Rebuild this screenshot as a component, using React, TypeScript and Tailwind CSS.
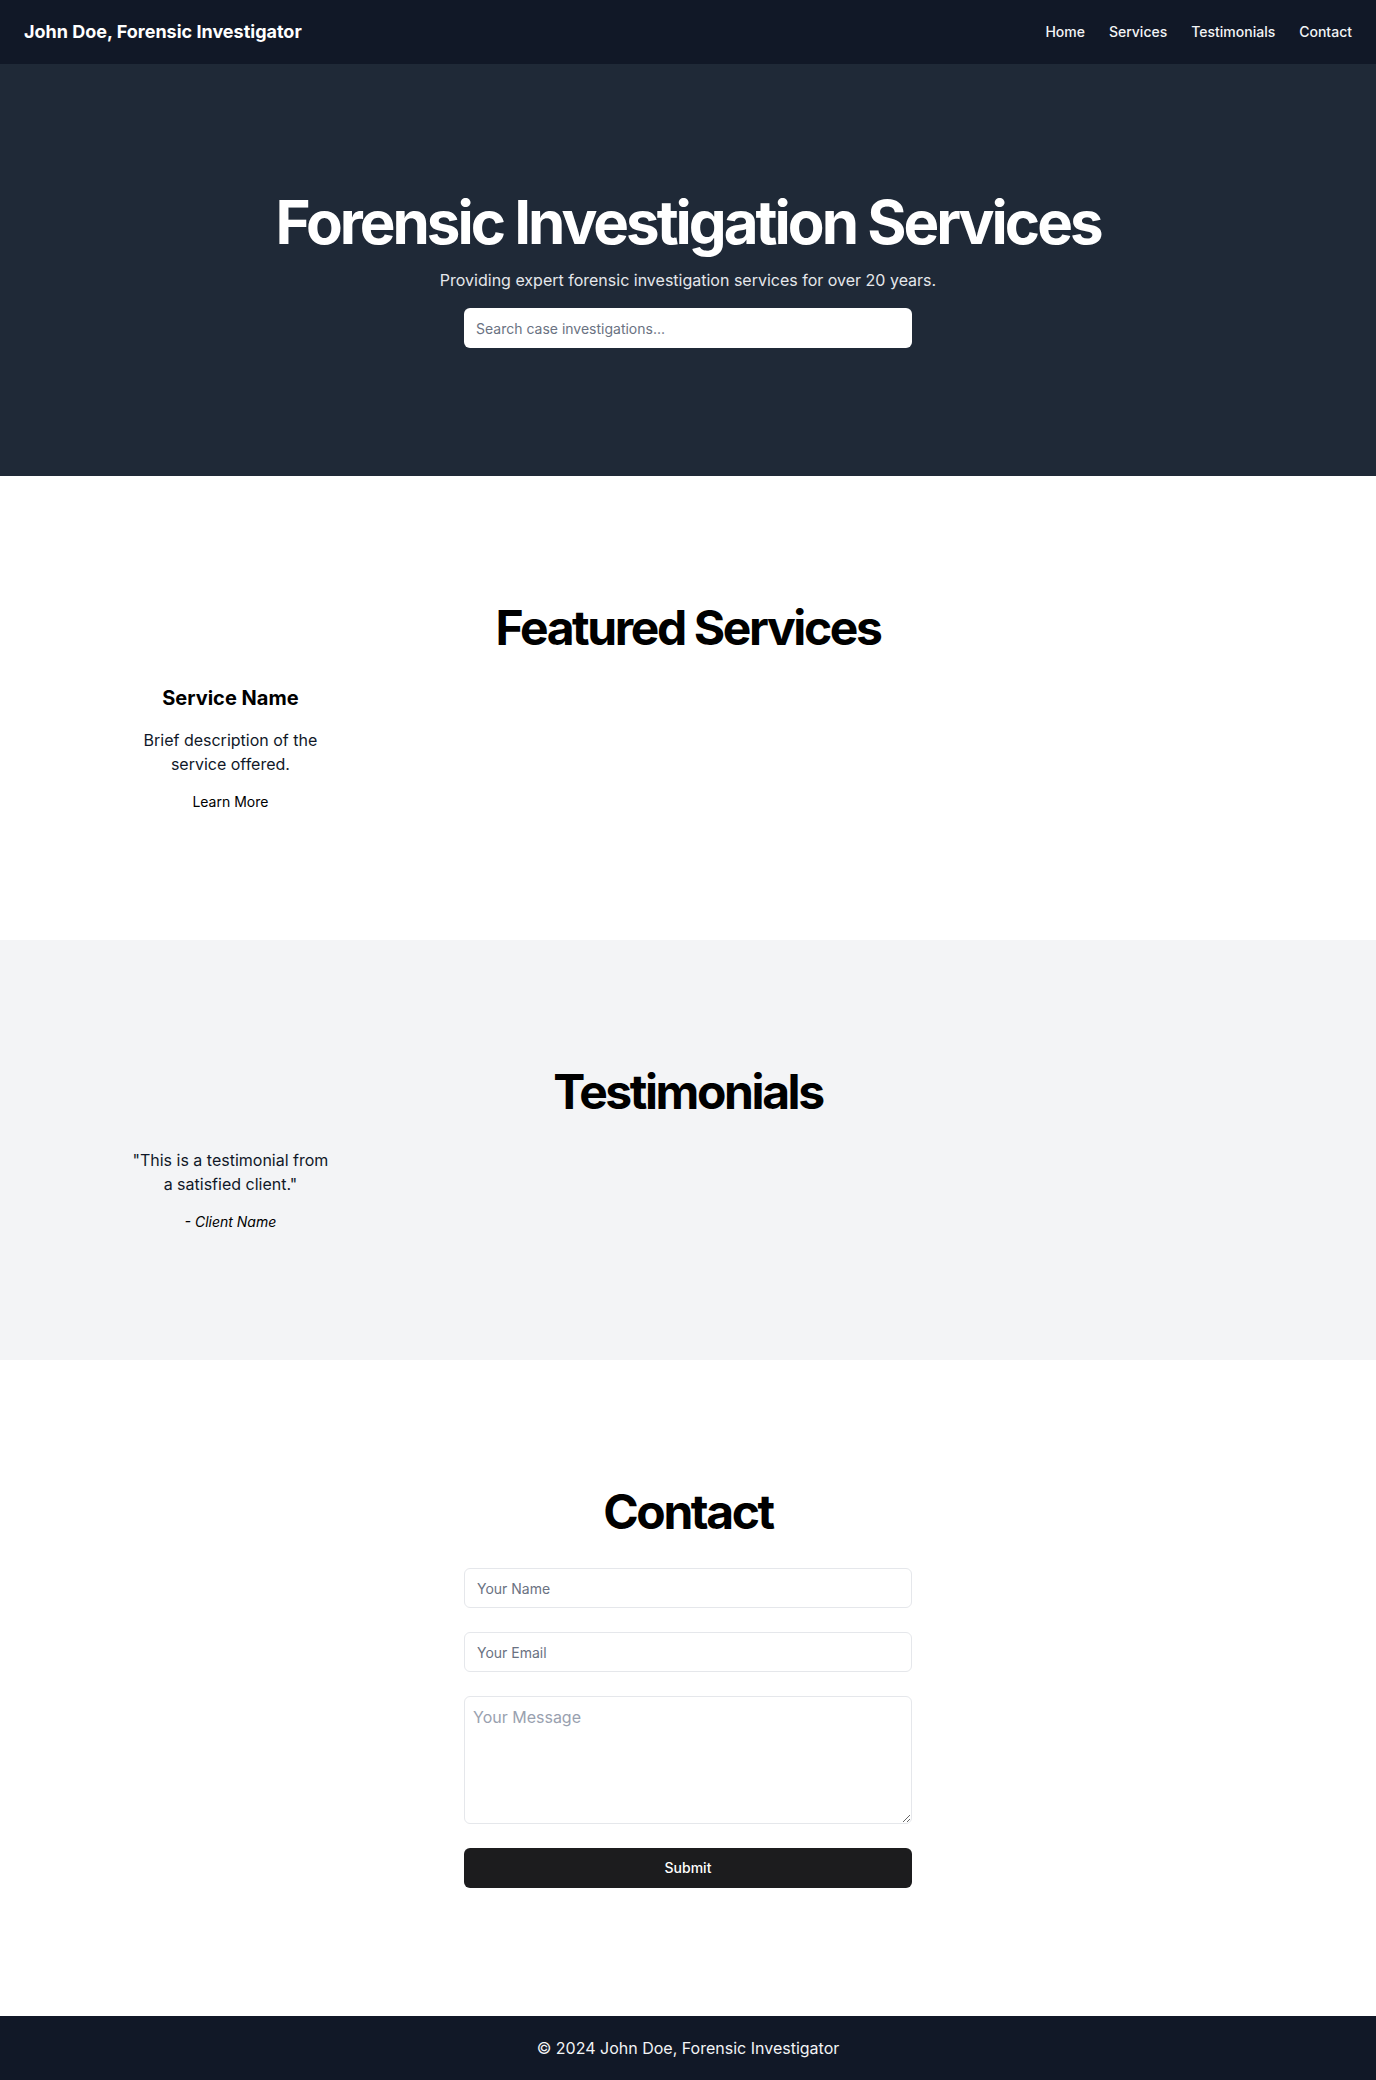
import React from "react";

export default function App() {
  return (
    <div className="min-h-screen bg-white text-black font-['Inter',sans-serif]">
      <header className="h-16 bg-[#111827] px-6 flex items-center justify-between">
        <span className="text-lg font-bold text-white">John Doe, Forensic Investigator</span>
        <nav className="flex items-center gap-6 text-sm font-medium text-gray-100">
          <a href="#">Home</a>
          <a href="#">Services</a>
          <a href="#">Testimonials</a>
          <a href="#">Contact</a>
        </nav>
      </header>

      <section className="bg-[#1f2937] py-32 flex flex-col items-center gap-4 text-center">
        <h1 className="text-6xl leading-none font-bold tracking-tighter text-white">
          Forensic Investigation Services
        </h1>
        <p className="text-base text-gray-200">
          Providing expert forensic investigation services for over 20 years.
        </p>
        <input
          className="h-10 w-full max-w-md rounded-md bg-white px-3 text-sm text-gray-900 placeholder:text-gray-500 outline-none"
          placeholder="Search case investigations..."
        />
      </section>

      <section className="py-32">
        <h2 className="text-5xl leading-none font-bold tracking-tighter text-center mb-8 text-black">
          Featured Services
        </h2>
        <div className="mx-auto max-w-[1280px] px-20">
          <div className="grid grid-cols-5 gap-6">
            <div className="flex flex-col items-center text-center gap-4">
              <h3 className="text-xl font-bold text-black">Service Name</h3>
              <p className="text-base text-gray-900">Brief description of the service offered.</p>
              <a href="#" className="text-sm font-normal text-black">Learn More</a>
            </div>
          </div>
        </div>
      </section>

      <section className="py-32 bg-[#f3f4f6]">
        <h2 className="text-5xl leading-none font-bold tracking-tighter text-center mb-8 text-black">
          Testimonials
        </h2>
        <div className="mx-auto max-w-[1280px] px-20">
          <div className="grid grid-cols-5 gap-6">
            <div className="flex flex-col items-center text-center gap-4">
              <p className="text-base text-gray-900">"This is a testimonial from a satisfied client."</p>
              <p className="text-sm italic text-black">- Client Name</p>
            </div>
          </div>
        </div>
      </section>

      <section className="py-32">
        <h2 className="text-5xl leading-none font-bold tracking-tighter text-center mb-8 text-black">Contact</h2>
        <form className="mx-auto max-w-md flex flex-col gap-6">
          <input
            className="h-10 w-full rounded-md border border-gray-200 bg-white px-3 text-sm placeholder:text-gray-500 outline-none"
            placeholder="Your Name"
          />
          <input
            className="h-10 w-full rounded-md border border-gray-200 bg-white px-3 text-sm placeholder:text-gray-500 outline-none"
            placeholder="Your Email"
          />
          <textarea
            className="h-32 w-full rounded-md border border-gray-200 bg-white p-2 text-base placeholder:text-gray-400 outline-none"
            placeholder="Your Message"
          />
          <button
            type="button"
            className="h-10 w-full rounded-md bg-[#1c1c1e] text-sm font-medium text-white"
          >
            Submit
          </button>
        </form>
      </section>

      <footer className="bg-[#111827] py-5 text-center text-base text-gray-100">
        © 2024 John Doe, Forensic Investigator
      </footer>
    </div>
  );
}
